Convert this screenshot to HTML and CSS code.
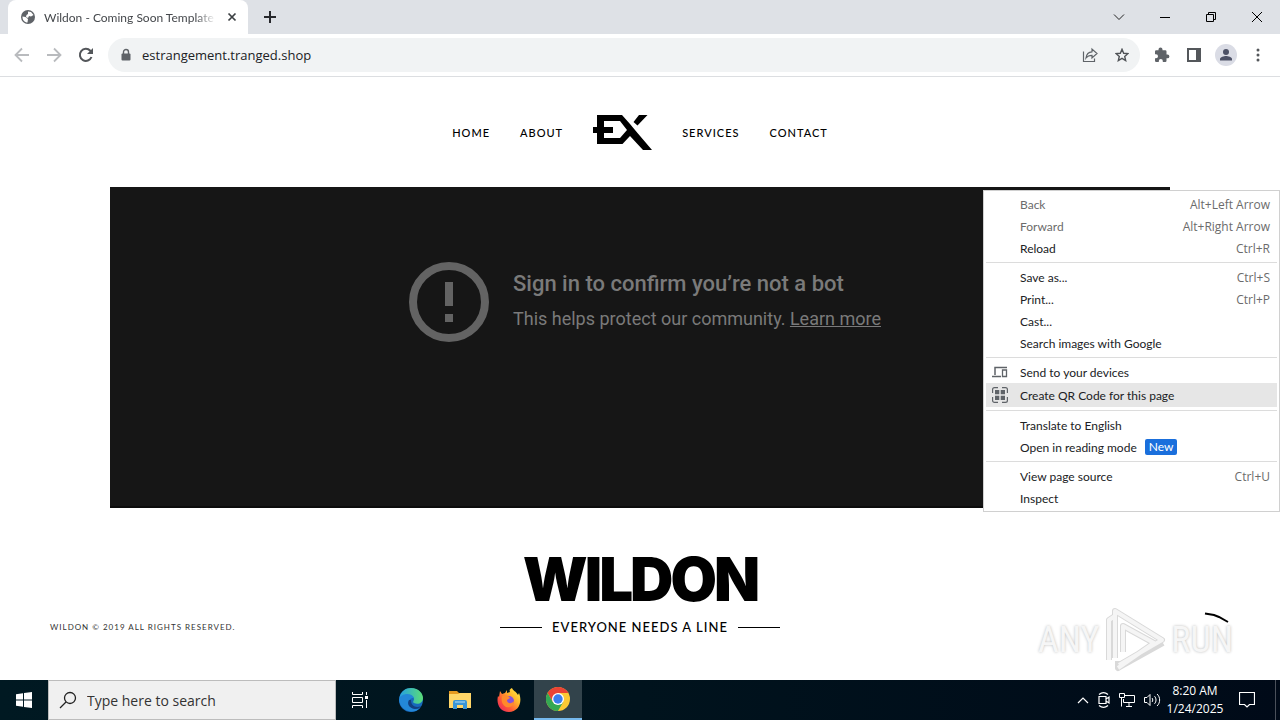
FILE: index.html
```html
<!DOCTYPE html>
<html lang="en">
<head>
    <meta charset="UTF-8">
    <meta name="viewport" content="width=device-width, initial-scale=1.0">
    <title>Wildon - Coming Soon Template</title>
    <link rel="stylesheet" href="styles.css">
</head>
<body>
    <!-- Tab strip -->
    <div class="tab-strip">
        <div class="tab">
            <svg class="favicon" width="16" height="16" viewBox="0 0 16 16"><circle cx="8" cy="8" r="7" fill="#5f6368"/><path d="M2.500 7.500l3 .5 2.500 2-.5 3.500C4.500 13.500 2.300 11 2.500 7.500zM8 2.500l3 .5 2.500 3-2.500 1.500-2-.5-1 2-2-1 .5-2L8 5z" fill="#fff"/></svg>
            <span class="tab-title">Wildon - Coming Soon Template</span>
            <button class="icon-btn tab-close" aria-label="Close tab"><svg width="10" height="10" viewBox="0 0 10 10"><path d="M1.500 1.500l7 7M8.500 1.500l-7 7" stroke="#3c4043" stroke-width="1.700"/></svg></button>
        </div>
        <button class="icon-btn new-tab" aria-label="New tab"><svg width="12" height="12" viewBox="0 0 12 12"><path d="M6 0v12M0 6h12" stroke="#27282c" stroke-width="2"/></svg></button>
        <div class="window-controls">
            <button class="icon-btn" aria-label="Search tabs"><svg width="12" height="12" viewBox="0 0 12 12"><path d="M1 3.500l5 5 5-5" fill="none" stroke="#222"/></svg></button>
            <button class="icon-btn" aria-label="Minimize"><svg width="10" height="10" viewBox="0 0 10 10"><path d="M0 5.500h10" stroke="#000"/></svg></button>
            <button class="icon-btn" aria-label="Restore"><svg width="10" height="10" viewBox="0 0 10 10"><path d="M.5 2.500h7v7h-7zM2.500 2.500v-2h7v7h-2" fill="none" stroke="#000"/></svg></button>
            <button class="icon-btn" aria-label="Close"><svg width="10" height="10" viewBox="0 0 10 10"><path d="M0 0l10 10M10 0L0 10" stroke="#000"/></svg></button>
        </div>
    </div>

    <!-- Toolbar -->
    <div class="toolbar">
        <button class="icon-btn" aria-label="Back"><svg width="16" height="16" viewBox="0 0 16 16"><path d="M15 8H2M8 1.500L1.500 8 8 14.500" fill="none" stroke="#b9bbbe" stroke-width="1.800"/></svg></button>
        <button class="icon-btn" aria-label="Forward"><svg width="16" height="16" viewBox="0 0 16 16"><path d="M1 8h13M8 1.500L14.500 8 8 14.500" fill="none" stroke="#b9bbbe" stroke-width="1.800"/></svg></button>
        <button class="icon-btn" aria-label="Reload"><svg width="16" height="16" viewBox="0 0 16 16"><path d="M13.500 10A6 6 0 1 1 12.300 3.800L13 4.500" fill="none" stroke="#53565a" stroke-width="2"/><path d="M15 1v6H9z" fill="#53565a"/></svg></button>
        <div class="address-bar">
            <svg width="10" height="14" viewBox="0 0 10 14"><path d="M2.500 6V4a2.500 2.500 0 0 1 5 0V6" fill="none" stroke="#5f6368" stroke-width="1.400"/><rect x=".5" y="5.500" width="9" height="7" rx="1" fill="#5f6368"/></svg>
            <input class="address" type="text" aria-label="Address" value="estrangement.tranged.shop">
            <button class="icon-btn" aria-label="Share"><svg width="16" height="16" viewBox="0 0 16 16"><path d="M1.500 4.500v10h11v-3M4 11c.5-4 2.500-6 6-6.200V2l5 4.500-5 4.500V8.300C7.500 8.300 5.500 9 4 11z" fill="none" stroke="#5f6368" stroke-width="1.200"/></svg></button>
            <button class="icon-btn" aria-label="Bookmark"><svg width="14" height="14" viewBox="0 0 16 16"><path d="M8 1.500l1.900 4.500 4.900.4-3.700 3.200 1.100 4.800L8 11.900l-4.200 2.500 1.100-4.800L1.200 6.400 6.100 6z" fill="none" stroke="#505357" stroke-width="1.600"/></svg></button>
        </div>
        <button class="icon-btn" aria-label="Extensions"><svg width="16" height="16" viewBox="0 0 16 16"><path d="M13.500 7.500h-1V4.500a1.200 1.200 0 0 0-1.200-1.200H8.500v-.8a2 2 0 0 0-4 0v.8H2.200A1.200 1.200 0 0 0 1 4.500v2.700h1a2 2 0 0 1 0 4H1v2.600A1.200 1.200 0 0 0 2.200 15h2.600v-1a2 2 0 0 1 4 0v1h2.500a1.200 1.200 0 0 0 1.200-1.200v-2.500h1a1.900 1.900 0 0 0 0-3.800z" fill="#5f6368"/></svg></button>
        <button class="icon-btn" aria-label="Side panel"><svg width="14" height="14" viewBox="0 0 14 14"><path d="M1 1h12v12H1z" fill="none" stroke="#54575b" stroke-width="2"/><path d="M9 1h5v12H9z" fill="#54575b"/></svg></button>
        <button class="icon-btn" aria-label="Profile"><svg width="22" height="22" viewBox="0 0 22 22"><circle cx="11" cy="11" r="11" fill="#dadce5"/><circle cx="11" cy="8" r="3" fill="#4c5166"/><path d="M5 16.500v-1.500c0-2 4-3 6-3s6 1 6 3v1.500z" fill="#4c5166"/></svg></button>
        <button class="icon-btn" aria-label="Menu"><svg width="4" height="14" viewBox="0 0 4 14"><g fill="#54575b"><circle cx="2" cy="2" r="1.500"/><circle cx="2" cy="7" r="1.500"/><circle cx="2" cy="12" r="1.500"/></g></svg></button>
    </div>

    <!-- Web page -->
    <main class="page">
        <nav class="nav">
            <a href="#">HOME</a>
            <a href="#">ABOUT</a>
            <a class="nav-logo" href="#" aria-label="EX"><svg width="59" height="36" viewBox="0 0 59 36"><path d="M4 1H29L37 10 44.500 19 59 36H50L37 22 29.500 30H4V19H0v-6h4zM11 7v6h9v6h-9v5h16l7-8-7-9zM44.500 11.500L40.500 8 46 1H54.500z" fill="#000" fill-rule="evenodd"/></svg></a>
            <a href="#">SERVICES</a>
            <a href="#">CONTACT</a>
        </nav>

        <section class="video">
            <svg width="80" height="80" viewBox="0 0 80 80"><circle cx="40" cy="40" r="36" fill="none" stroke="#636363" stroke-width="8"/><path d="M36 20h8v24h-8zM36 52h8v8h-8z" fill="#636363"/></svg>
            <div class="video-text">
                <h2>Sign in to confirm you’re not a bot</h2>
                <p>This helps protect our community. <a href="#">Learn more</a></p>
            </div>
        </section>

        <footer class="footer">
            <p class="copyright">WILDON © 2019 ALL RIGHTS RESERVED.</p>
            <div class="brand">
                <h1>WILDON</h1>
                <p class="tagline">EVERYONE NEEDS A LINE</p>
            </div>
        </footer>

        <svg class="stroke-mark" width="26" height="12" viewBox="0 0 26 12"><path d="M1 1.500l9 1.500 5 2 9 5" fill="none" stroke="#000" stroke-width="2"/></svg>

        <div class="watermark">
            <span>ANY</span>
            <svg width="64" height="68" viewBox="0 0 64 68"><g fill="none" stroke-linejoin="round"><path d="M6 54V14l6-4M12 52V5l47 29-43 25M20 46V20l31 17-36 25v-7M15 62l45-25" stroke="#d9d9d9" stroke-width="6"/><path d="M6 54V14l6-4M12 52V5l47 29-43 25M20 46V20l31 17-36 25" stroke="#f5f5f5" stroke-width="4"/></g></svg>
            <span>RUN</span>
        </div>

        <div class="context-menu">
            <button class="menu-item disabled"><span>Back</span><kbd>Alt+Left Arrow</kbd></button>
            <button class="menu-item disabled"><span>Forward</span><kbd>Alt+Right Arrow</kbd></button>
            <button class="menu-item"><span>Reload</span><kbd>Ctrl+R</kbd></button>
            <hr>
            <button class="menu-item"><span>Save as...</span><kbd>Ctrl+S</kbd></button>
            <button class="menu-item"><span>Print...</span><kbd>Ctrl+P</kbd></button>
            <button class="menu-item"><span>Cast...</span></button>
            <button class="menu-item"><span>Search images with Google</span></button>
            <hr>
            <button class="menu-item"><svg width="16" height="16" viewBox="0 0 16 16"><path d="M3 11V3.500h12M0 12.500h9" fill="none" stroke="#5f6368" stroke-width="1.500"/><path d="M10.500 6h4v6.500h-4z" fill="none" stroke="#5f6368" stroke-width="1.300"/></svg><span>Send to your devices</span></button>
            <button class="menu-item active"><svg width="16" height="16" viewBox="0 0 16 16"><path d="M.6 6V2.500A1.900 1.900 0 0 1 2.500.6H6M10 .6h3.500a1.900 1.900 0 0 1 1.900 1.900V6M15.400 10v3.500a1.900 1.900 0 0 1-1.900 1.900H10M6 15.400H2.500a1.900 1.900 0 0 1-1.900-1.900V10" fill="none" stroke="#5f6368" stroke-width="1.200"/><path d="M3 3h4.300v4.300H3zM8.700 3H13v4.300H8.700zM3 8.700h4.300V13H3zM8.700 8.700H13V13H8.700z" fill="#5f6368"/></svg><span>Create QR Code for this page</span></button>
            <hr>
            <button class="menu-item"><span>Translate to English</span></button>
            <button class="menu-item"><span>Open in reading mode</span><span class="badge">New</span></button>
            <hr>
            <button class="menu-item"><span>View page source</span><kbd>Ctrl+U</kbd></button>
            <button class="menu-item"><span>Inspect</span></button>
        </div>
    </main>

    <!-- Taskbar -->
    <div class="taskbar">
        <button class="task-btn" aria-label="Start"><svg width="16" height="16" viewBox="0 0 16 16"><path d="M0 2.200L7 1.200V7.500H0zM8 1l8-1v7.500H8zM0 8.500h7v6.300l-7-1zM8 8.500h8V16l-8-1z" fill="#fff"/></svg></button>
        <label class="search">
            <svg width="18" height="18" viewBox="0 0 18 18"><circle cx="11" cy="7" r="5.500" fill="none" stroke="#222" stroke-width="1.300"/><path d="M7 11l-6 6" stroke="#222" stroke-width="1.300"/></svg>
            <input type="text" aria-label="Search" placeholder="Type here to search">
        </label>
        <button class="task-btn" aria-label="Task view"><svg width="16" height="16" viewBox="0 0 16 16"><path d="M.5 0v2.500h10V0M.5 16v-2.500h10V16M.5 5.500h10v5H.5zM14.500 0v3M14.500 8v8" fill="none" stroke="#fff"/><path d="M13 4h3v3h-3z" fill="#fff"/></svg></button>
        <div class="apps">
            <button class="task-btn" aria-label="Edge"><svg width="24" height="24" viewBox="0 0 24 24"><defs><linearGradient id="edge-top" x2="1"><stop stop-color="#249fe3"/><stop offset="1" stop-color="#5bdd77"/></linearGradient></defs><circle cx="12" cy="12" r="12" fill="#1769bc"/><path d="M.3 10C2 3 6.500 0 12 0c8 0 12 6 12 10 0 5-5 7-9 5-2-1 0-2 0-4 0-4-9-6-14.700-1z" fill="url(#edge-top)"/><path d="M0 12c1-7 13-8 15-2-5-1-7 6-3 9 3 3 7 2 9 1-6 7-20 3-21-8z" fill="#2387d8"/><path d="M10 12c-2 3-1 8 6 9 3 0 5-1 6-3-4 2-10 1-10-6z" fill="#123f80"/></svg></button>
            <button class="task-btn" aria-label="File Explorer"><svg width="22" height="20" viewBox="0 0 22 20"><path d="M0 1h8l2 2h12v4H0z" fill="#e69a20"/><path d="M0 4h9l2-1h11v15H0z" fill="#ffd668"/><path d="M4 19v-7a2 2 0 0 1 2-2h10a2 2 0 0 1 2 2v7h-4v-4H8v4z" fill="#3995d5"/><path d="M6 11h10v2H6z" fill="#76bae6"/></svg></button>
            <button class="task-btn" aria-label="Firefox"><svg width="24" height="24" viewBox="0 0 24 24"><defs><linearGradient id="fox" x1="1" x2="0" y2="1"><stop stop-color="#fff44f"/><stop offset=".35" stop-color="#ffb72b"/><stop offset=".65" stop-color="#ff5a36"/><stop offset="1" stop-color="#e51b67"/></linearGradient></defs><path d="M3 3l2 3 3-1 2-3v3l3-1c-1-2 0-3 2-4 1 3 4 3 6 7l1-2c4 10-1 19-10 19C3 24-1 16 1 8l1 1z" fill="url(#fox)"/><circle cx="12" cy="13" r="5" fill="#8452db"/><path d="M5 8c4-2 7 0 8 2l-3 2c0 4 5 4 7 1 0 5-4 7-8 6-4-2-5-6-4-11z" fill="#ff8a2b"/></svg></button>
            <button class="task-btn running" aria-label="Chrome"><svg width="24" height="24" viewBox="0 0 24 24"><circle cx="12" cy="12" r="12" fill="#fcc934"/><path d="M1.600 6A12 12 0 0 1 22.400 6H12L6.800 15z" fill="#ea4335"/><path d="M1.600 6A12 12 0 0 0 12 24l5.200-9-10.400 0z" fill="#34a853"/><circle cx="12" cy="12" r="6" fill="#fff"/><circle cx="12" cy="12" r="4.700" fill="#3b7ded"/></svg></button>
        </div>
        <div class="tray">
            <svg width="12" height="8" viewBox="0 0 12 8"><path d="M1 7l5-5 5 5" fill="none" stroke="#fff" stroke-width="1.200"/></svg>
            <svg width="12" height="16" viewBox="0 0 12 16"><path d="M1 4.500h7v7H1zM8 7l3-2v6L8 9M1 2.500C4 0 7 0 10 2.500M1 13.500c3 2.500 6 2.500 9 0" fill="none" stroke="#fff" stroke-width="1.200"/></svg>
            <svg width="16" height="14" viewBox="0 0 16 14"><path d="M5 2.500h10.500v7H4.500V6M10 9.500v4M7 13.500h6M.5.500h5v4h-5zM2.500 5v8.500" fill="none" stroke="#fff"/></svg>
            <svg width="17" height="14" viewBox="0 0 17 14"><path d="M.5 4.500H3l3-3v11l-3-3H.5zM8 5c1 1 1 3 0 4M10.500 3.200c2 2 2 5.600 0 7.600M13 1c3.500 3 3.500 9 0 12" fill="none" stroke="#fff"/></svg>
        </div>
        <div class="clock"><span>8:20 AM</span><span>1/24/2025</span></div>
        <button class="icon-btn notifications" aria-label="Notifications"><svg width="16" height="16" viewBox="0 0 16 16"><path d="M.5.5h15v12h-5L8 15l-2.500-2.500h-5z" fill="none" stroke="#fff" stroke-width="1.200"/></svg></button>
        <span class="show-desktop"></span>
    </div>
</body>
</html>
```

FILE: styles.css
```css
* {
    box-sizing: border-box;
}
body {
    margin: 0;
    min-height: 100vh;
    display: flex;
    flex-direction: column;
    font-family: "Open Sans", "Noto Sans", sans-serif;
    font-size: 12px;
    background: #fff;
    color: #202124;
}
h1, h2, p {
    margin: 0;
}
button, input {
    font: inherit;
    color: inherit;
    border: none;
    background: none;
    padding: 0;
}
svg {
    display: block;
    flex-shrink: 0;
}
.icon-btn {
    display: flex;
    align-items: center;
    justify-content: center;
    width: 16px;
    height: 24px;
    flex-shrink: 0;
}

/* Tab strip */
.tab-strip {
    height: 34px;
    display: flex;
    align-items: center;
    background: #dee1e6;
    padding-left: 8px;
}
.tab {
    width: 240px;
    height: 34px;
    display: flex;
    align-items: center;
    gap: 8px;
    padding: 0 8px 0 12px;
    background: #fff;
    border-radius: 8px 8px 0 0;
}
.tab-title {
    flex: 1;
    white-space: nowrap;
    overflow: hidden;
    font-family: Lato, sans-serif;
    font-size: 12px;
    color: #45484c;
    -webkit-mask-image: linear-gradient(to right, #000 88%, transparent);
    mask-image: linear-gradient(to right, #000 88%, transparent);
}
.new-tab {
    margin-left: 14px;
}
.window-controls {
    margin-left: auto;
    display: flex;
    height: 28px;
}
.window-controls .icon-btn {
    width: 46px;
    height: 28px;
}

/* Toolbar */
.toolbar {
    height: 43px;
    display: flex;
    align-items: center;
    gap: 16px;
    padding: 0 14px;
    border-bottom: 1px solid #dcdee1;
}
.address-bar {
    flex: 1;
    height: 34px;
    display: flex;
    align-items: center;
    gap: 16px;
    padding: 0 10px 0 13px;
    margin-left: -2px;
    margin-right: -2px;
    border-radius: 17px;
    background: #f1f3f4;
}
.address {
    flex: 1;
    margin-left: -5px;
    font-size: 13px;
}

/* Page */
.page {
    flex: 1;
    position: relative;
    font-family: Lato, sans-serif;
    color: #000;
}
.nav {
    height: 110px;
    display: flex;
    align-items: center;
    justify-content: center;
    gap: 30px;
}
.nav a {
    color: #000;
    text-decoration: none;
    font-size: 11px;
    font-weight: 500;
    letter-spacing: 1px;
}
.video {
    margin: 0 110px;
    height: 321px;
    display: flex;
    align-items: flex-start;
    gap: 24px;
    padding: 75px 24px 0 299px;
    background: #161616;
    border-bottom: 2px solid #0c0c0c;
    font-family: Roboto, sans-serif;
    color: #7a7a7a;
}
.video-text h2 {
    font-size: 22px;
    line-height: 28px;
    font-weight: 500;
    margin: 8px 0;
}
.video-text p {
    font-size: 18px;
    line-height: 26px;
}
.video-text a {
    color: inherit;
}
.footer {
    display: grid;
    grid-template-columns: 1fr auto 1fr;
    align-items: end;
    padding: 41px 50px 0;
}
.copyright {
    font-size: 8px;
    line-height: 20px;
    letter-spacing: 1px;
    color: #333;
}
.brand {
    width: 280px;
    text-align: center;
}
.brand h1 {
    font-family: Inter, sans-serif;
    font-size: 60px;
    line-height: 60px;
    font-weight: 900;
    letter-spacing: -3px;
}
.tagline {
    display: flex;
    align-items: center;
    gap: 10px;
    margin-top: 8px;
    font-size: 13px;
    line-height: 20px;
    font-weight: 500;
    letter-spacing: 1px;
    white-space: nowrap;
}
.tagline::before,
.tagline::after {
    content: "";
    flex: 1;
    height: 1px;
    background: #000;
}
.stroke-mark {
    position: absolute;
    right: 50px;
    bottom: 56px;
}
.watermark {
    position: absolute;
    right: 47px;
    bottom: 6px;
    display: flex;
    align-items: center;
    gap: 4px;
    font-family: "Liberation Sans Narrow", "Roboto Condensed", Roboto, sans-serif;
    font-size: 36px;
    line-height: 40px;
    color: #f6f6f6;
    text-shadow: 0 0 3px #bbb;
}

/* Context menu */
.context-menu {
    position: absolute;
    top: 113px;
    right: 0;
    width: 297px;
    padding: 2px;
    background: #fff;
    border: 1px solid #d0d0d0;
}
.context-menu hr {
    margin: 3px 0;
    border: none;
    height: 1px;
    background: #dcdcdc;
}
.menu-item {
    display: flex;
    align-items: center;
    width: 100%;
    height: 22px;
    padding: 0 7px 0 34px;
    font-size: 12px;
    text-align: left;
    color: #202124;
}
.menu-item svg {
    margin-left: -28px;
    margin-right: 12px;
}
.menu-item.active {
    height: 24px;
    background: #e6e6e6;
}
.menu-item kbd {
    margin-left: auto;
    font-family: "Open Sans", "Noto Sans", sans-serif;
    color: #6b6b6b;
}
.menu-item.disabled {
    color: #6b6b6b;
}
.menu-item .badge {
    margin-left: 8px;
    padding: 0 4px;
    line-height: 16px;
    border-radius: 2px;
    background: #1a6fdc;
    color: #fff;
}

/* Taskbar */
.taskbar {
    height: 40px;
    display: flex;
    align-items: center;
    background: linear-gradient(to right, #001922, #00131d 50%, #000a18);
    color: #fff;
}
.task-btn {
    width: 48px;
    height: 40px;
    display: flex;
    align-items: center;
    justify-content: center;
}
.apps {
    display: flex;
    gap: 1px;
    margin-left: 3px;
}
.running {
    background: #32434b;
    border-bottom: 2px solid #76b9ed;
}
.search {
    width: 288px;
    height: 40px;
    display: flex;
    align-items: center;
    gap: 10px;
    padding: 0 10px;
    background: #f0f0f0;
    border: 1px solid #bcbcbc;
    color: #333;
}
.search input {
    flex: 1;
    font-size: 14px;
}
.search input::placeholder {
    color: #333;
}
.tray {
    margin-left: auto;
    display: flex;
    align-items: center;
    gap: 9px;
}
.clock {
    width: 68px;
    display: flex;
    flex-direction: column;
    align-items: center;
    line-height: 18px;
}
.notifications {
    margin: 0 20px 0 10px;
}
.show-desktop {
    width: 5px;
    height: 40px;
    border-left: 1px solid #4a505a;
}
```
